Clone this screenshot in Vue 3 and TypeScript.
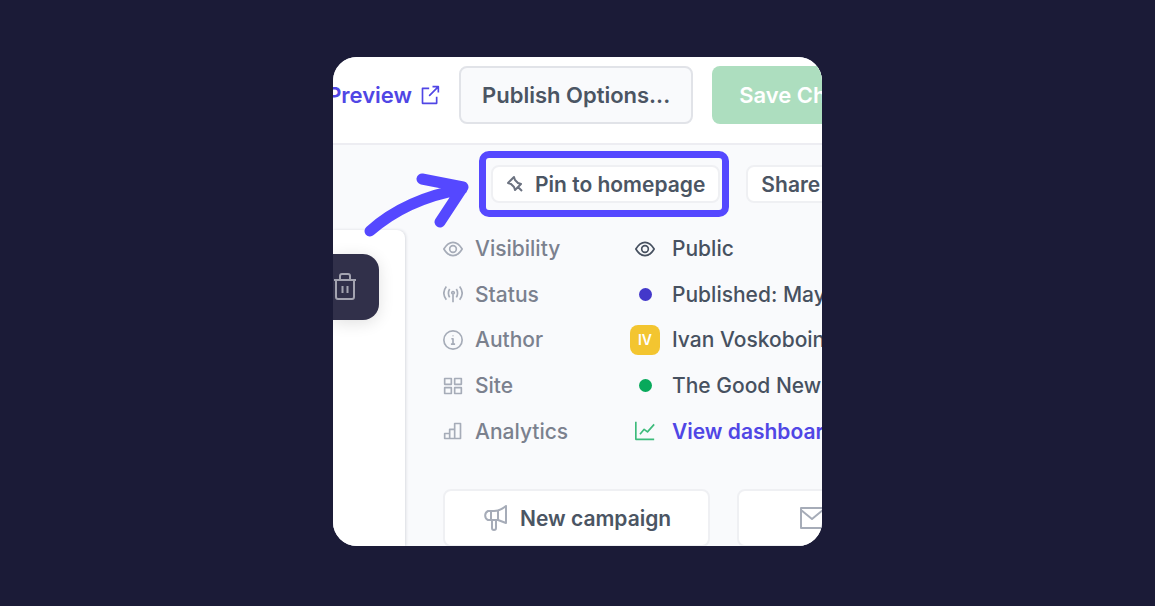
<script setup lang="ts">
type Mark = 'eye' | 'signal' | 'info' | 'grid' | 'bars'
type Lead = 'eye' | 'dot-blue' | 'dot-green' | 'avatar' | 'chart'

interface Detail {
  label: string
  mark: Mark
  lead: Lead
  value: string
  href?: string
}

const icons: Record<Mark | 'chart', string> = {
  eye: 'M1 12C4 7 8 4 12 4s8 3 11 8c-3 5-7 8-11 8S4 17 1 12z M12 8a4 4 0 1 1 0 8a4 4 0 1 1 0-8z',
  signal: 'M12 12v10 M12 9a1.500 1.500 0 1 0 .01 0 M8 6q-3 5 0 10 M16 6q3 5 0 10 M4 3Q-2 11 4 19 M20 3q6 8 0 16',
  info: 'M12 1a11 11 0 1 1 0 22a11 11 0 1 1 0-22z M10 10.500h2v6.500 M9.500 17h5 M12 6.500v1',
  grid: 'M2 3h8v7H2z M14 3h8v7h-8z M2 14h8v7H2z M14 14h8v7h-8z',
  bars: 'M2 15h6v6H2z M8 10h6v11H8z M14 3h7v18h-7z',
  chart: 'M1 1v21h22 M6 16l5-6 4 3 8-9',
}

const details: Detail[] = [
  { label: 'Visibility', mark: 'eye', lead: 'eye', value: 'Public' },
  { label: 'Status', mark: 'signal', lead: 'dot-blue', value: 'Published: May 12' },
  { label: 'Author', mark: 'info', lead: 'avatar', value: 'Ivan Voskoboinyk' },
  { label: 'Site', mark: 'grid', lead: 'dot-green', value: 'The Good News' },
  { label: 'Analytics', mark: 'bars', lead: 'chart', value: 'View dashboard', href: '#dashboard' },
]
</script>

<template>
  <main class="stage">
    <section class="card">
      <header class="toolbar">
        <a class="preview" href="#preview">
          Preview
          <svg class="icon" viewBox="0 0 24 24" aria-hidden="true">
            <path d="M11 4H3v18h17v-8 M15 2h7v7 M22 2L11 13" />
          </svg>
        </a>
        <button class="options" type="button">Publish Options...</button>
        <button class="save" type="button">Save Changes</button>
      </header>

      <div class="content">
        <div class="editor">
          <div class="paper">
            <button class="trash" type="button" aria-label="Delete">
              <svg viewBox="0 0 24 28" aria-hidden="true">
                <path d="M1 7h22 M3 7v17q0 2 2 2h14q2 0 2-2V7 M7 7V3q0-2 2-2h6q2 0 2 2v4 M9.500 13v7 M14.500 13v7" />
              </svg>
            </button>
          </div>
        </div>

        <div class="panel">
          <div class="actions">
            <span class="highlight">
              <button class="small pin" type="button">
                <svg viewBox="0 0 18 18" aria-hidden="true">
                  <path d="M2 8L8 2l1 3 3 3 3 1-6 6-1-3-3-3z M12 12l4 4" />
                </svg>
                Pin to homepage
              </button>
            </span>
            <button class="small" type="button">Share</button>
          </div>

          <dl class="details">
            <div v-for="item in details" :key="item.label" class="row">
              <dt>
                <svg class="icon" viewBox="0 0 24 24" aria-hidden="true"><path :d="icons[item.mark]" /></svg>
                {{ item.label }}
              </dt>
              <dd>
                <span class="lead">
                  <span v-if="item.lead === 'avatar'" class="avatar">IV</span>
                  <svg v-else-if="item.lead === 'eye' || item.lead === 'chart'" class="icon" :class="item.lead" viewBox="0 0 24 24" aria-hidden="true">
                    <path :d="icons[item.lead]" />
                  </svg>
                  <span v-else class="dot" :class="item.lead"></span>
                </span>
                <a v-if="item.href" :href="item.href">{{ item.value }}</a>
                <template v-else>{{ item.value }}</template>
              </dd>
            </div>
          </dl>

          <div class="campaigns">
            <button class="large" type="button">
              <svg viewBox="0 0 26 26" aria-hidden="true">
                <path d="M24 1v17L16 15H6a5 5 0 0 1 0-9h6q6 0 12-5z M9 6v9 M16 5v10 M10 15v8q0 2 2 2t2-2v-8" />
              </svg>
              New campaign
            </button>
            <button class="large mail" type="button" aria-label="Email">
              <svg viewBox="0 0 26 26" aria-hidden="true">
                <path d="M2 3h22v20H2z M2 5l11 9 11-9" />
              </svg>
            </button>
          </div>
        </div>
      </div>

      <svg class="arrow" viewBox="0 0 106 68" aria-hidden="true">
        <path d="M7 60Q43 28 99 18 M59 8L100 16L77 51" />
      </svg>
    </section>
  </main>
</template>

<style scoped>
.stage {
  box-sizing: border-box;
  min-height: 100vh;
  padding: 57px 24px;
  background: #1b1b37;
  font-family: Inter, "Liberation Sans", sans-serif;
  font-weight: 500;
}
.card {
  position: relative;
  display: flex;
  flex-direction: column;
  max-width: 489px;
  aspect-ratio: 1;
  margin: 0 auto;
  overflow: hidden;
  border-radius: 24px;
  background: #f9fafc;
}
button {
  box-sizing: border-box;
  flex: none;
  margin: 0;
  font: inherit;
  font-weight: 600;
  white-space: nowrap;
}
a {
  color: #5046e5;
  font-weight: 600;
  text-decoration: none;
}
svg {
  flex: none;
  fill: none;
  stroke: currentColor;
  stroke-width: 2;
  stroke-linejoin: round;
}
.icon {
  width: 20px;
  height: 20px;
}
.toolbar {
  display: flex;
  align-items: flex-start;
  gap: 19px;
  height: 88px;
  padding-top: 9px;
  box-sizing: border-box;
  background: #fff;
  border-bottom: 2px solid #ededf2;
  font-size: 22px;
}
.preview {
  display: flex;
  flex: none;
  justify-content: flex-end;
  align-items: center;
  gap: 8px;
  width: 107px;
  height: 58px;
}
.options,
.save {
  height: 58px;
  padding: 0 21px;
  border-radius: 8px;
}
.options {
  border: 2px solid #e1e3e8;
  background: #f9fafc;
  color: #4b5563;
}
.save {
  padding: 0 27px;
  border: 0;
  background: #addebf;
  color: #fff;
}
.content {
  display: flex;
  flex: 1;
  min-height: 0;
}
.editor {
  display: flex;
  flex: none;
  width: 72px;
  padding-top: 85px;
}
.paper {
  flex: 1;
  padding-top: 24px;
  border-radius: 0 8px 0 0;
  background: #fff;
  box-shadow: 1px 0 3px #d9dbe1;
}
.trash {
  display: grid;
  place-items: center start;
  width: 46px;
  height: 66px;
  padding: 0;
  border: 0;
  border-radius: 0 16px 16px 0;
  background: #31304a;
  color: #a3a3b0;
  box-shadow: 0 3px 16px #0000001f;
}
.trash svg {
  width: 24px;
  height: 28px;
}
.panel {
  flex: 1;
  min-width: 0;
  padding: 6px 0 0 38px;
}
.actions {
  display: flex;
  align-items: center;
  gap: 17px;
  padding-left: 36px;
}
.highlight {
  flex: none;
  padding: 7px 2px 7px 5px;
  border: 7px solid #5548ff;
  border-radius: 10px;
}
.small,
.large {
  display: flex;
  align-items: center;
  border: 2px solid #eff0f3;
  border-radius: 8px;
  background: #fff;
  color: #4b5563;
  font-size: 21px;
}
.small {
  height: 38px;
  padding: 0 13px;
}
.pin {
  gap: 11px;
}
.pin svg {
  width: 18px;
  height: 18px;
  color: #6b7280;
}
.details {
  display: grid;
  grid-auto-rows: 1fr;
  height: 228px;
  margin: 9px 0 0;
  font-size: 21px;
}
.row {
  display: flex;
  align-items: center;
}
dt,
dd {
  display: flex;
  flex: none;
  align-items: center;
  margin: 0;
  white-space: nowrap;
}
dt {
  width: 187px;
  gap: 12px;
  color: #7b818e;
}
dt .icon {
  color: #a6acb8;
}
dd {
  gap: 12px;
  color: #475160;
}
.lead {
  display: grid;
  place-items: center;
  width: 30px;
}
.dot {
  width: 13px;
  height: 13px;
  border-radius: 50%;
}
.dot-blue {
  background: #4338ca;
}
.dot-green {
  background: #08a95b;
}
.chart {
  color: #3dbb7b;
}
.avatar {
  width: 30px;
  border-radius: 8px;
  background: #f3c530;
  color: #fff;
  font-size: 14px;
  font-weight: 600;
  line-height: 30px;
  text-align: center;
}
.campaigns {
  display: flex;
  gap: 27px;
  margin-top: 35px;
}
.large {
  height: 58px;
  padding: 0 37px;
  gap: 12px;
}
.mail {
  padding: 0 60px;
}
.large svg {
  width: 26px;
  height: 26px;
  color: #a6acb8;
}
.arrow {
  position: absolute;
  top: 114px;
  left: 30px;
  width: 106px;
  height: 68px;
  color: #5548ff;
  stroke-width: 11;
  stroke-linecap: round;
}
</style>

<style>
body {
  background: #1b1b37;
}
</style>
